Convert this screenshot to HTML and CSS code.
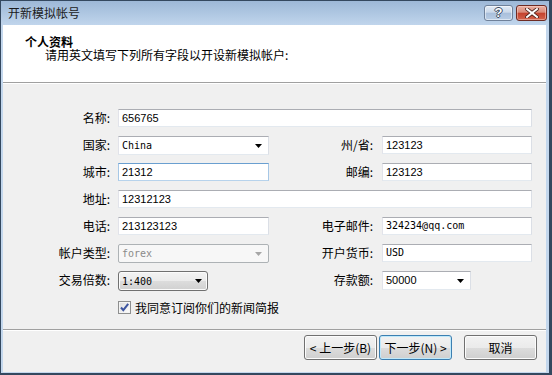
FILE: index.html
```html
<!DOCTYPE html>
<html lang="zh-CN">
<head>
<meta charset="utf-8">
<title>开新模拟帐号</title>
<link rel="stylesheet" href="styles.css">
</head>
<body>
<div class="window">
  <div class="titlebar">
    <span class="title">开新模拟帐号</span>
    <div class="caption-buttons">
      <span class="cap help">?</span>
      <span class="cap close">
        <svg width="14" height="10" viewBox="0 0 14 10"><path d="M2 1L7 5L12 1M2 9L7 5L12 9" fill="none" stroke="#4a2019" stroke-width="3.6" stroke-linecap="square"/><path d="M2 1L7 5L12 1M2 9L7 5L12 9" fill="none" stroke="#ffffff" stroke-width="2" stroke-linecap="square"/></svg>
      </span>
    </div>
  </div>
  <div class="frame">
    <div class="client">
      <div class="header">
        <div class="h-title">个人资料</div>
        <div class="h-sub">请用英文填写下列所有字段以开设新模拟帐户:</div>
      </div>
      <div class="body">
        <div class="form">
          <span class="lbl">名称:</span>
          <div class="field wide sans">656765</div>

          <span class="lbl">国家:</span>
          <div class="field combo mono">China<svg class="arrow" width="7" height="4" viewBox="0 0 7 4"><path d="M0 0H7L3.5 4Z"/></svg></div>
          <span class="lbl lbl2">州/省:</span>
          <div class="field sans">123123</div>

          <span class="lbl">城市:</span>
          <div class="field focus sans">21312</div>
          <span class="lbl lbl2">邮编:</span>
          <div class="field sans">123123</div>

          <span class="lbl">地址:</span>
          <div class="field wide sans">12312123</div>

          <span class="lbl">电话:</span>
          <div class="field sans">213123123</div>
          <span class="lbl lbl2">电子邮件:</span>
          <div class="field mono">324234@qq.com</div>

          <span class="lbl">帐户类型:</span>
          <div class="field combo disabled mono">forex<svg class="arrow" width="7" height="4" viewBox="0 0 7 4"><path d="M0 0H7L3.5 4Z"/></svg></div>
          <span class="lbl lbl2">开户货币:</span>
          <div class="field mono">USD</div>

          <span class="lbl">交易倍数:</span>
          <div class="dropbtn mono">1:400<svg class="arrow" width="7" height="4" viewBox="0 0 7 4"><path d="M0 0H7L3.5 4Z"/></svg></div>
          <span class="lbl lbl2">存款额:</span>
          <div class="field combo short sans">50000<svg class="arrow" width="7" height="4" viewBox="0 0 7 4"><path d="M0 0H7L3.5 4Z"/></svg></div>

          <div class="check-row">
            <span class="checkbox"><svg width="11" height="11" viewBox="0 0 11 11"><path d="M2 5.5L4.3 8.2L9.2 1.8" fill="none" stroke="#3d55a0" stroke-width="2"/></svg></span>
            <span class="check-text">我同意订阅你们的新闻简报</span>
          </div>
        </div>
        <div class="footer">
          <span class="btn">&lt; 上一步(B)</span>
          <span class="btn default">下一步(N) &gt;</span>
          <span class="btn cancel">取消</span>
        </div>
      </div>
    </div>
  </div>
</div>
</body>
</html>
```
FILE: styles.css
```css
html, body {
  margin: 0;
  padding: 0;
  background: #ffffff;
}

body {
  font-family: "Noto Sans CJK SC", "Liberation Sans", sans-serif;
  font-size: 12px;
  color: #000;
}

.window {
  width: 552px;
  height: 375px;
  box-sizing: border-box;
  border-style: solid;
  border-color: #34485f;
  border-width: 1px 3px 2px 1px;
  display: flex;
  flex-direction: column;
  background: #c3d7ed;
}

.titlebar {
  height: 24px;
  flex: none;
  display: flex;
  justify-content: space-between;
  align-items: flex-start;
  background: linear-gradient(#9db8d7, #c0d5ec);
  padding-left: 7px;
}

.title {
  line-height: 24px;
  font-size: 12px;
  color: #1b1b1b;
}

.caption-buttons {
  display: flex;
  gap: 3px;
  margin-top: 4px;
  margin-right: 2px;
}

.cap {
  height: 16px;
  box-sizing: border-box;
  border-radius: 3px;
  display: flex;
  align-items: center;
  justify-content: center;
}

.help {
  width: 29px;
  border: 1px solid #6f819a;
  background: linear-gradient(#e2ebf6 0%, #cbd9ea 45%, #a9bfdb 50%, #b9cde5 100%);
  box-shadow: inset 0 0 0 1px rgba(255,255,255,0.5);
  font-family: "Liberation Sans", sans-serif;
  font-weight: bold;
  font-size: 13px;
  color: #fff;
  text-shadow: 1px 0 #3a4a5e, -1px 0 #3a4a5e, 0 1px #3a4a5e, 0 -1px #3a4a5e;
  line-height: 14px;
}

.close {
  width: 31px;
  border: 1px solid #6e2b23;
  background: linear-gradient(#eab0a3 0%, #d98a78 45%, #c4412c 50%, #d3644d 100%);
  box-shadow: inset 0 0 0 1px rgba(255,220,210,0.45);
}

.frame {
  flex: 1;
  display: flex;
  padding: 0 3px 1px 2px;
}

.client {
  flex: 1;
  display: flex;
  flex-direction: column;
  background: #f0f0f0;
}

.header {
  flex: none;
  box-sizing: border-box;
  background: #ffffff;
  border-bottom: 1px solid #a0a0a0;
  height: 58px;
  padding-top: 10px;
}

.h-title {
  font-weight: bold;
  line-height: 13px;
  padding-left: 22px;
}

.h-sub {
  line-height: 13px;
  padding-left: 42px;
}

.body {
  flex: 1;
  display: flex;
  flex-direction: column;
  border-top: 1px solid #ffffff;
}

.form {
  display: grid;
  grid-template-columns: 115px 151px 113px 150px;
  grid-auto-rows: 18px;
  row-gap: 9px;
  padding-top: 25px;
  align-items: start;
}

.lbl {
  grid-column: 1;
  text-align: right;
  padding-right: 8px;
  line-height: 18px;
  color: #000;
  white-space: nowrap;
}

.lbl2 {
  grid-column: 3;
  padding-right: 9px;
}

.field {
  height: 18px;
  box-sizing: border-box;
  background: #ffffff;
  border: 1px solid;
  border-color: #abadb3 #dbdfe6 #e3e9ef #e2e3ea;
  padding-left: 3px;
  line-height: 16px;
  white-space: nowrap;
  overflow: hidden;
}

.wide {
  grid-column: 2 / 5;
}

.sans {
  font-family: "Liberation Sans", sans-serif;
  font-size: 11px;
}

.mono {
  font-family: "DejaVu Sans Mono", "Liberation Mono", monospace;
  font-size: 10px;
}

.focus {
  border-color: #6a9fd0 #a6c7e6 #b7d3ec #a6c7e6;
}

.combo {
  height: 19px;
  line-height: 17px;
  display: flex;
  justify-content: space-between;
  align-items: center;
  padding-right: 6px;
}

.short {
  width: 89px;
}

.disabled {
  border-color: #adb2b5;
  border-radius: 2px;
  background: #f7f7f7;
  color: #8a8a8a;
}

.disabled .arrow {
  fill: #a6a6a6;
}

.arrow {
  fill: #000;
  flex: none;
}

.dropbtn {
  width: 90px;
  height: 20px;
  box-sizing: border-box;
  border: 1px solid #707070;
  border-radius: 3px;
  background: linear-gradient(#f3f3f3 0%, #ebebeb 50%, #dddddd 50%, #d0d0d0 100%);
  box-shadow: inset 0 0 0 1px #fbfbfb;
  display: flex;
  justify-content: space-between;
  align-items: center;
  padding: 0 5px 0 3px;
}

.check-row {
  grid-column: 2 / 5;
  display: flex;
  align-items: center;
  height: 18px;
  gap: 4px;
}

.checkbox {
  width: 13px;
  height: 13px;
  box-sizing: border-box;
  border: 1px solid #8e8f8f;
  background: linear-gradient(135deg, #dcdcdc, #ffffff);
  box-shadow: inset 0 0 0 1px #f4f4f4;
  display: flex;
  align-items: center;
  justify-content: center;
}

.footer {
  margin-top: auto;
  height: 43px;
  box-sizing: border-box;
  border-top: 1px solid #a0a0a0;
  box-shadow: inset 0 1px 0 #ffffff;
  display: flex;
  justify-content: flex-end;
  align-items: flex-start;
  padding: 5px 9px 0 0;
}

.btn {
  width: 73px;
  height: 25px;
  box-sizing: border-box;
  border: 1px solid #707070;
  border-radius: 3px;
  background: linear-gradient(#f2f2f2 0%, #ebebeb 50%, #dddddd 50%, #cfcfcf 100%);
  box-shadow: inset 0 0 0 1px #fcfcfc;
  display: flex;
  align-items: center;
  justify-content: center;
  white-space: nowrap;
}

.default {
  margin-left: 2px;
  border-color: #3c7fb1;
  box-shadow: inset 0 0 0 1px #bfe9fb;
}

.cancel {
  margin-left: 12px;
}
```
